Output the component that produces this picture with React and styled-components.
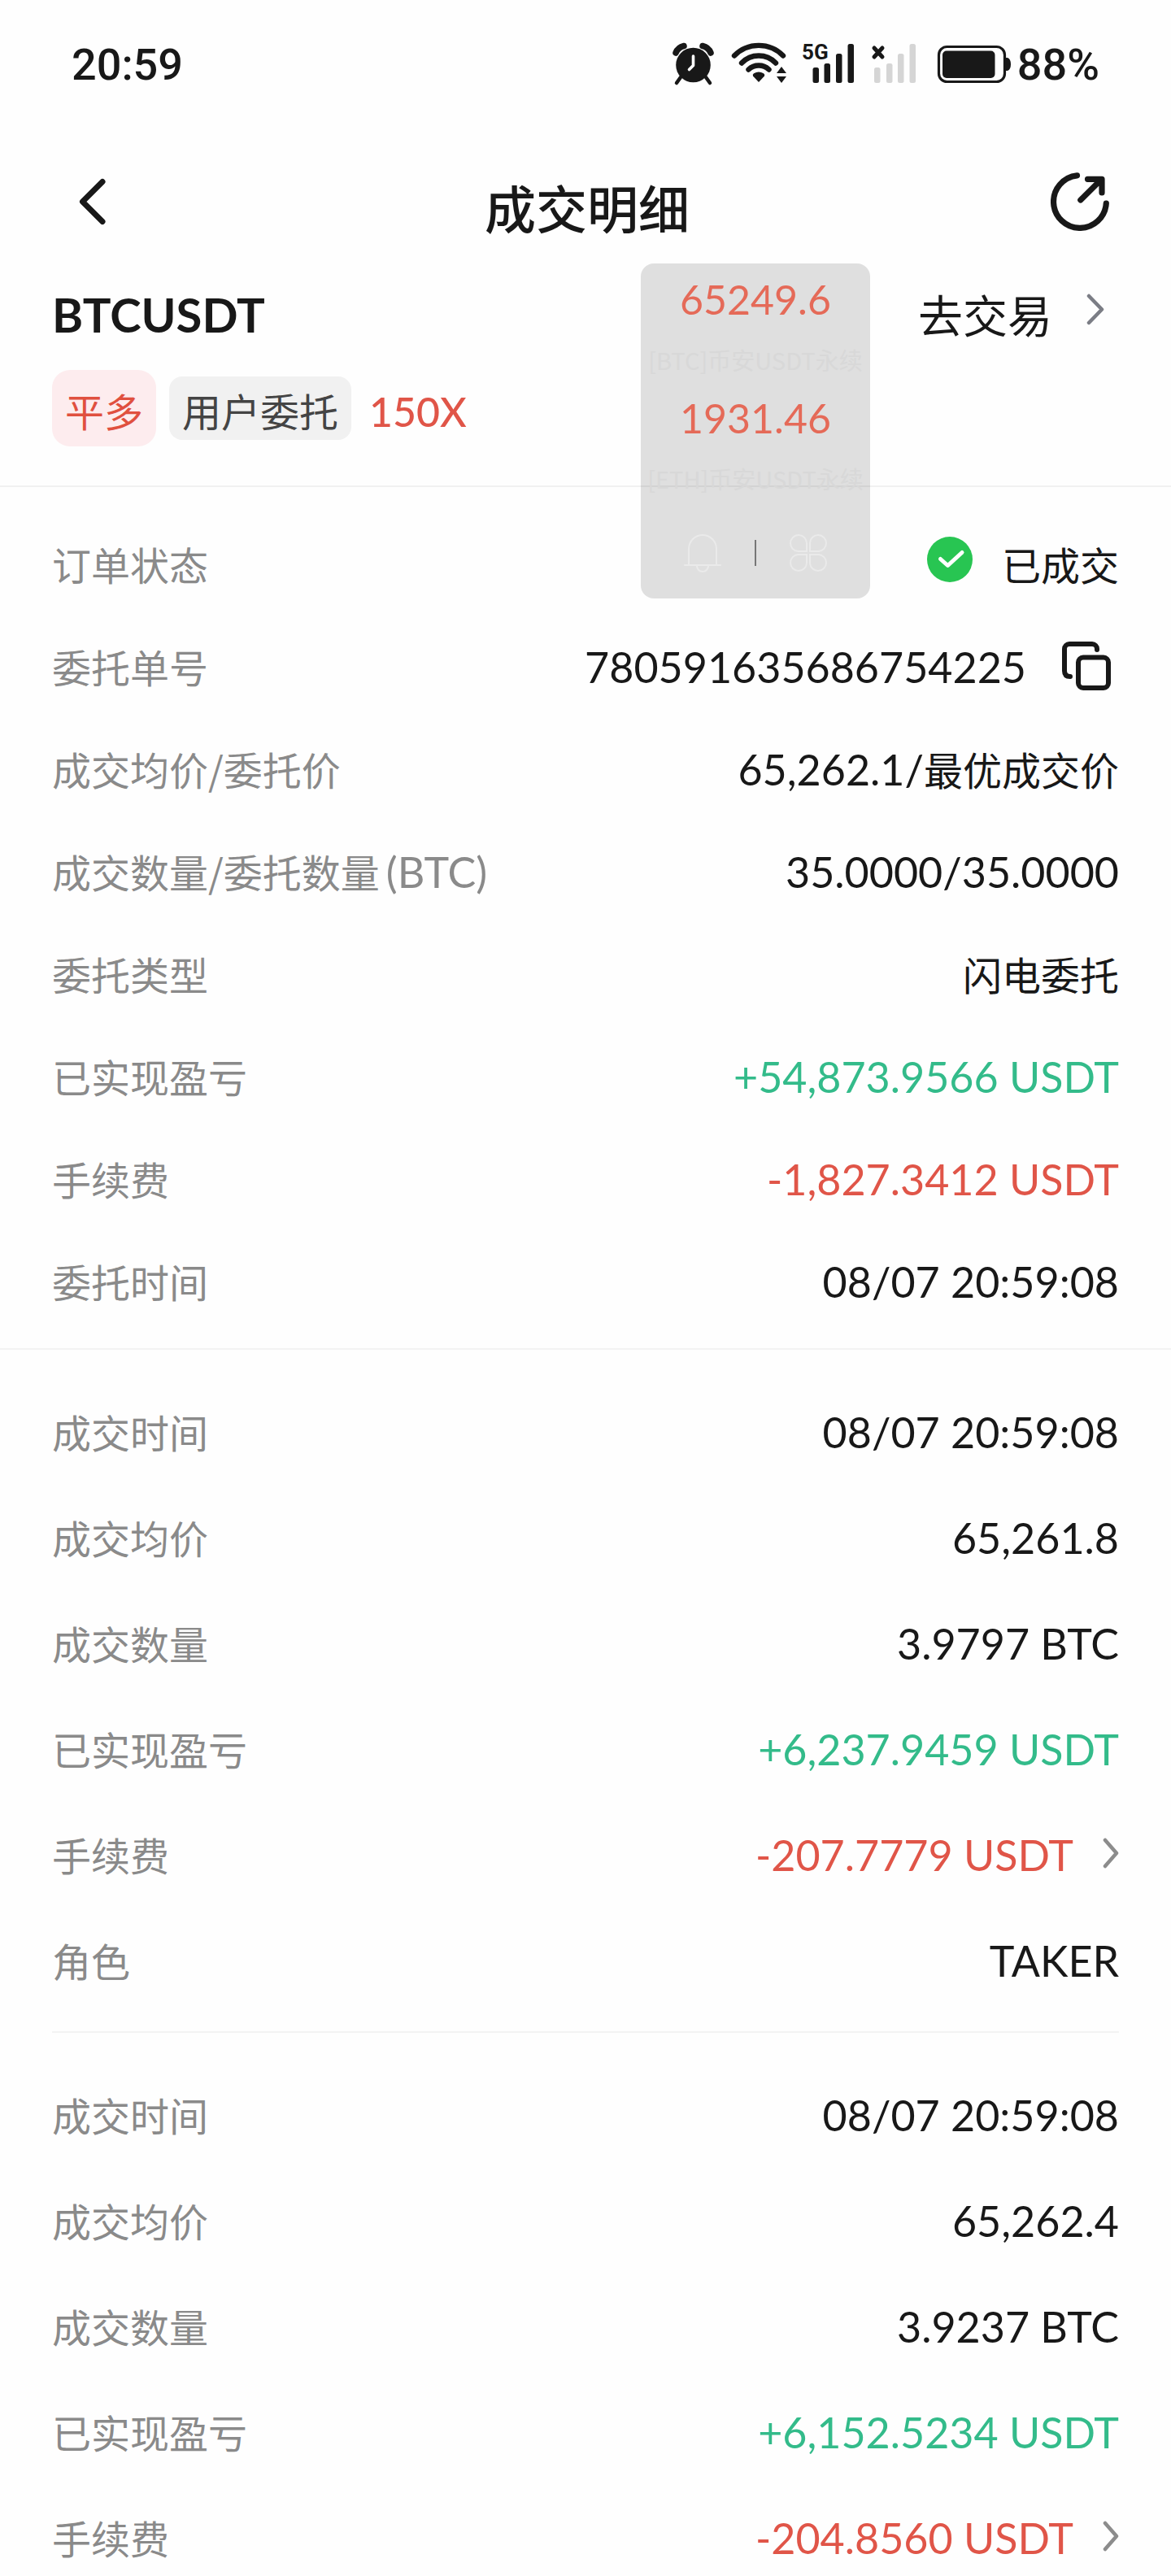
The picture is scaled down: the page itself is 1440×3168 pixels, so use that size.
import React from "react";
import styled, { createGlobalStyle } from "styled-components";

const orderRows = [
  { label: "订单状态", text: "已成交", icon: "done" },
  { label: "委托单号", num: "780591635686754225", icon: "copy" },
  { label: "成交均价/委托价", num: "65,262.1/", text: "最优成交价" },
  { label: "成交数量/委托数量", unit: "(BTC)", num: "35.0000/35.0000" },
  { label: "委托类型", text: "闪电委托" },
  { label: "已实现盈亏", num: "+54,873.9566 USDT", tone: "up" },
  { label: "手续费", num: "-1,827.3412 USDT", tone: "down" },
  { label: "委托时间", num: "08/07 20:59:08" }
];

const fills = [
  [
    { label: "成交时间", num: "08/07 20:59:08" },
    { label: "成交均价", num: "65,261.8" },
    { label: "成交数量", num: "3.9797 BTC" },
    { label: "已实现盈亏", num: "+6,237.9459 USDT", tone: "up" },
    { label: "手续费", num: "-207.7779 USDT", tone: "down", icon: "more" },
    { label: "角色", num: "TAKER" }
  ],
  [
    { label: "成交时间", num: "08/07 20:59:08" },
    { label: "成交均价", num: "65,262.4" },
    { label: "成交数量", num: "3.9237 BTC" },
    { label: "已实现盈亏", num: "+6,152.5234 USDT", tone: "up" },
    { label: "手续费", num: "-204.8560 USDT", tone: "down", icon: "more" }
  ]
];

const tickers = [
  { price: "65249.6", name: "[BTC]币安USDT永续" },
  { price: "1931.46", name: "[ETH]币安USDT永续" }
];

export default function App() {
  return (
    <Page>
      <GlobalStyle />

      <StatusBar>
        <Clock>20:59</Clock>
        <StatusIcons />
        <Battery>88%</Battery>
      </StatusBar>

      <NavBar>
        <IconButton type="button" aria-label="返回">
          <BackIcon />
        </IconButton>
        <Title>成交明细</Title>
        <IconButton type="button" aria-label="分享">
          <ShareIcon />
        </IconButton>
      </NavBar>

      <Summary>
        <PairRow>
          <Pair>BTCUSDT</Pair>
          <TradeLink href="#trade">
            去交易
            <Chevron large />
          </TradeLink>
        </PairRow>
        <Tags>
          <SideTag>平多</SideTag>
          <SourceTag>用户委托</SourceTag>
          <Leverage>150X</Leverage>
        </Tags>
      </Summary>

      <OrderList>
        {orderRows.map((row) => (
          <DetailRow key={row.label} row={row} />
        ))}
      </OrderList>

      {fills.map((rows, index) => (
        <React.Fragment key={index}>
          {index > 0 && <InsetDivider />}
          <FillList>
            {rows.map((row) => (
              <DetailRow key={row.label} row={row} />
            ))}
          </FillList>
        </React.Fragment>
      ))}

      <FloatingQuotes>
        {tickers.map((item) => (
          <Quote key={item.name}>
            <QuotePrice>{item.price}</QuotePrice>
            <QuoteName>{item.name}</QuoteName>
          </Quote>
        ))}
        <QuoteActions>
          <PlainButton type="button" aria-label="提醒">
            <BellIcon />
          </PlainButton>
          <Bar />
          <PlainButton type="button" aria-label="更多">
            <CloverIcon />
          </PlainButton>
        </QuoteActions>
      </FloatingQuotes>
    </Page>
  );
}

function DetailRow({ row }) {
  return (
    <Row>
      <Label>
        {row.label}
        {row.unit && <Unit>{row.unit}</Unit>}
      </Label>
      <Value $tone={row.tone} $gap={row.icon === "copy" ? 44 : 36}>
        {row.icon === "done" && <DoneIcon />}
        <span>
          {row.num && <Num>{row.num}</Num>}
          {row.text}
        </span>
        {row.icon === "copy" && (
          <CopyButton type="button" aria-label="复制">
            <CopyIcon />
          </CopyButton>
        )}
        {row.icon === "more" && <Chevron />}
      </Value>
    </Row>
  );
}

/* ================= ICONS ================= */

function StatusIcons() {
  return (
    <StatusSvg width="416" height="76" viewBox="825 44 416 76">
      {/* alarm */}
      <circle cx="850.5" cy="82" r="21.3" />
      <path d="M835 97l-5 7M866 97l5 7" stroke="#181818" strokeWidth="4.5" strokeLinecap="round" />
      <path d="M829 67a14 14 0 0 1 10-8.500M872 67a14 14 0 0 0-10-8.500" fill="none" stroke="#181818" strokeWidth="7.5" strokeLinecap="round" />
      <path d="M850.5 71v11.500l-5 5" fill="none" stroke="#fff" strokeWidth="3.6" strokeLinecap="round" strokeLinejoin="round" />

      {/* wifi */}
      <g fill="none" stroke="#181818" strokeWidth="6.4" strokeLinecap="round">
        <path d="M901 70.500a42 42 0 0 1 60 0" />
        <path d="M910 79.500a29 29 0 0 1 42 0" />
        <path d="M918.500 87.500a18 18 0 0 1 25 0" />
      </g>
      <path d="M931 103l-7-7.500q-1-2 1-3.200a12 12 0 0 1 12 0q2 1.200 1 3.200z" />
      <path d="M959 84l6 8h-12zM959 104l6-8h-12z" />

      {/* mobile network */}
      <NetLabel x="984" y="75">5G</NetLabel>
      <rect x="997.5" y="85" width="7.5" height="19" rx="2.5" />
      <rect x="1011.5" y="80" width="7.5" height="24" rx="2.5" />
      <rect x="1026" y="68" width="7.5" height="36" rx="2.5" />
      <rect x="1040.5" y="56" width="7.5" height="48" rx="2.5" />

      {/* second sim, no service */}
      <path d="M1073 61l10 11M1083 61l-10 11" stroke="#181818" strokeWidth="5" strokeLinecap="round" />
      <g fill="#d5d5d5">
        <rect x="1073" y="85" width="7.5" height="19" rx="2.5" />
        <rect x="1088" y="80" width="7.5" height="24" rx="2.5" />
        <rect x="1102" y="68" width="7.5" height="36" rx="2.5" />
        <rect x="1116.5" y="56" width="7.5" height="48" rx="2.5" />
      </g>

      {/* battery */}
      <rect x="1152.5" y="59.5" width="81" height="43" rx="10" fill="none" stroke="#181818" strokeWidth="3.2" />
      <rect x="1157" y="64.5" width="64.5" height="33.5" rx="5" />
      <path d="M1235 73h2q4 1.500 4 8t-4 8h-2z" />
    </StatusSvg>
  );
}

function BackIcon() {
  return (
    <svg width="72" height="72" viewBox="0 0 72 72" fill="none" stroke="#181818" strokeWidth="7" strokeLinecap="round" strokeLinejoin="round">
      <path d="M46 11.500L21.500 36L46 60.500" />
    </svg>
  );
}

function ShareIcon() {
  return (
    <svg width="72" height="72" viewBox="0 0 72 72" fill="none" stroke="#181818" strokeWidth="7.2" strokeLinecap="round" strokeLinejoin="round">
      <path d="M32.500 3.800A32.400 32.400 0 1 0 68.300 38" />
      <path d="M36.800 34L62.500 8.500M45.500 8.300H63V25" />
    </svg>
  );
}

function Chevron({ large }) {
  return large ? (
    <svg width="22" height="48" viewBox="0 0 22 48" fill="none" stroke="#7b7d85" strokeWidth="4.5" strokeLinecap="round" strokeLinejoin="round" aria-hidden="true">
      <path d="M3 3L19 19.500L3 36" />
    </svg>
  ) : (
    <svg width="20" height="40" viewBox="0 0 20 40" fill="none" stroke="#8c8c8c" strokeWidth="4.5" strokeLinecap="round" strokeLinejoin="round" aria-hidden="true">
      <path d="M3 3L17 19L3 35" />
    </svg>
  );
}

function DoneIcon() {
  return (
    <svg width="56" height="66" viewBox="0 0 56 66" aria-hidden="true">
      <circle cx="28" cy="28" r="28" fill="#28c552" />
      <path d="M16.500 27.500L25.500 35.500L43 19.500" fill="none" stroke="#fff" strokeWidth="5" strokeLinecap="round" strokeLinejoin="round" />
    </svg>
  );
}

function CopyIcon() {
  return (
    <svg width="60" height="60" viewBox="0 0 60 60" fill="none" stroke="#181818" strokeWidth="6" strokeLinecap="round" strokeLinejoin="round">
      <rect x="20" y="19.5" width="37" height="37.5" rx="6" />
      <path d="M43 10V9a6 6 0 0 0-6-6H9a6 6 0 0 0-6 6V36q0 7 7 7" />
    </svg>
  );
}

function BellIcon() {
  return (
    <svg width="48" height="48" viewBox="0 0 48 48" fill="none" stroke="#eaeaea" strokeWidth="2" strokeLinecap="round">
      <path d="M2 39H46M7 39V19a17 17 0 0 1 34 0V39M17 40a7 7 0 0 0 14 0" />
    </svg>
  );
}

function CloverIcon() {
  return (
    <svg width="48" height="48" viewBox="0 0 48 48" fill="none" stroke="#eaeaea" strokeWidth="2">
      <path d="M22 22V11.500A10 10 0 1 0 11.500 22zM26 22V11.500A10 10 0 1 1 36.500 22zM22 26V36.500A10 10 0 1 1 11.500 26zM26 26V36.500A10 10 0 1 0 36.500 26z" />
    </svg>
  );
}

/* ================= STYLES ================= */

const GlobalStyle = createGlobalStyle`
  * {
    box-sizing: border-box;
  }

  body {
    margin: 0;
    background: #fefefe;
    color: #181818;
    font-family: "Noto Sans CJK SC", sans-serif;
  }

  button {
    border: 0;
    padding: 0;
    background: none;
    font: inherit;
    color: inherit;
  }
`;

const Page = styled.main`
  position: relative;
  height: 100vh;
  overflow-x: hidden;
  overflow-y: auto;
  scrollbar-width: none;
`;

const StatusBar = styled.div`
  display: flex;
  align-items: center;
  height: 160px;
  padding: 0 88px;
  font-family: Roboto, sans-serif;
  font-size: 54px;
  font-weight: 500;
  line-height: 60px;
`;

const Clock = styled.time`
  flex: 1;
`;

const StatusSvg = styled.svg`
  fill: #181818;
`;

const NetLabel = styled.text`
  font-family: Roboto, sans-serif;
  font-size: 26px;
  font-weight: 700;
`;

const Battery = styled.span`
  margin-left: 8px;
`;

const NavBar = styled.header`
  display: flex;
  align-items: center;
  justify-content: space-between;
  height: 176px;
  padding: 0 76px 0 80px;
`;

const IconButton = styled.button`
  display: flex;
`;

const Title = styled.h1`
  margin: 0;
  padding-top: 12px;
  font-size: 63px;
  font-weight: 500;
  line-height: 92px;
`;

const Summary = styled.section`
  padding: 0 64px 48px;
  border-bottom: 2px solid #f1f1f1;
`;

const PairRow = styled.div`
  display: flex;
  align-items: center;
  justify-content: space-between;
  height: 102px;
`;

const Pair = styled.h2`
  margin: 0;
  font-family: Lato, sans-serif;
  font-size: 58px;
  font-weight: 700;
  line-height: 68px;
`;

const TradeLink = styled.a`
  display: flex;
  align-items: center;
  gap: 42px;
  padding: 0 18px 4px 0;
  color: inherit;
  font-size: 55px;
  line-height: 80px;
  text-decoration: none;
`;

const Tags = styled.div`
  display: flex;
  align-items: center;
  gap: 16px;
  margin-top: 17px;
`;

const Tag = styled.span`
  font-size: 48px;
`;

const SideTag = styled(Tag)`
  padding: 4px 16px 0;
  border-radius: 22px;
  background: #fdecee;
  color: #e0503f;
  line-height: 90px;
`;

const SourceTag = styled(Tag)`
  padding: 4px 16px 0;
  border-radius: 16px;
  background: #f1f1f1;
  color: #444;
  line-height: 74px;
`;

const Leverage = styled.span`
  margin-left: 6px;
  padding-top: 8px;
  color: #e05548;
  font-family: Lato, sans-serif;
  font-size: 50px;
  font-weight: 500;
  line-height: 60px;
`;

const Row = styled.div`
  display: flex;
  align-items: center;
  justify-content: space-between;
`;

const OrderList = styled.dl`
  margin: 0;
  padding: 31px 64px 20px;
  border-bottom: 2px solid #f3f3f3;

  ${Row} {
    height: 126px;
  }
`;

const FillList = styled.dl`
  margin: 0;
  padding: 35px 64px 23px;

  ${Row} {
    height: 130px;
  }
`;

const InsetDivider = styled.hr`
  margin: 0 64px;
  border: 0;
  border-top: 2px solid #f3f3f3;
`;

const Label = styled.dt`
  color: #8a8a8a;
  font-size: 48px;
  line-height: 64px;
  white-space: nowrap;
`;

const tones = {
  up: "#33bb8a",
  down: "#e05548"
};

const Value = styled.dd`
  display: flex;
  align-items: center;
  gap: ${({ $gap }) => $gap}px;
  margin: 0;
  color: ${({ $tone }) => tones[$tone] || "#181818"};
  font-size: 48px;
  line-height: 64px;
  white-space: nowrap;
`;

const Num = styled.span`
  font-family: Lato, sans-serif;
  font-size: 52px;
`;

const Unit = styled(Num)`
  margin-left: 8px;
`;

const CopyButton = styled.button`
  display: flex;
  margin-right: 10px;
`;

/* translucent price window that floats above the page */
const FloatingQuotes = styled.aside`
  position: absolute;
  top: 324px;
  right: 370px;
  width: 282px;
  height: 412px;
  border-radius: 16px;
  background: rgba(0, 0, 0, 0.12);
`;

const Quote = styled.div`
  display: flex;
  flex-direction: column;
  align-items: center;
  height: 146px;
  padding-top: 14px;
`;

const QuotePrice = styled.strong`
  color: #e56a58;
  font-family: Lato, sans-serif;
  font-size: 50px;
  font-weight: 400;
  line-height: 60px;
`;

const QuoteName = styled.span`
  margin-top: 24px;
  color: #d8d8d8;
  font-size: 29px;
  line-height: 40px;
  white-space: nowrap;
`;

const QuoteActions = styled.div`
  display: flex;
  align-items: center;
  justify-content: space-between;
  padding: 40px 52px 0;
`;

const PlainButton = styled.button`
  display: flex;
`;

const Bar = styled.span`
  width: 2px;
  height: 32px;
  background: #777;
`;
